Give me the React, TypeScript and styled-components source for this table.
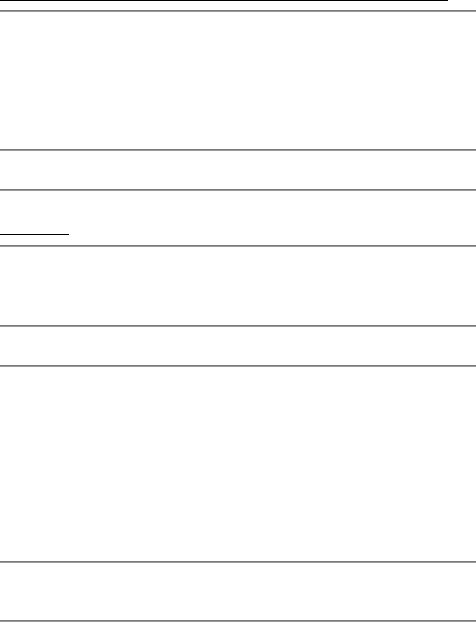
import * as React from 'react'
import styled, { createGlobalStyle } from 'styled-components'

const GlobalStyle = createGlobalStyle`
  html, body {
    margin: 0;
    padding: 0;
    background: #ffffff;
    font-family: 'Liberation Sans', Arial, sans-serif;
  }
`

const Page = styled.div`
  display: flex;
  flex-flow: column;
  width: 476px;
  height: 622px;
  overflow: hidden;
`

const TopRule = styled.div`
  width: 448px;
  height: 1px;
  background: #000000;
  margin-bottom: 9px;
`

const Divider = styled.hr`
  margin: 0;
  height: 0;
  border: none;
  border-top: 1px solid #7a7a7a;
  border-bottom: 1px solid #9a9a9a;
`

const Section = styled.section<{ $height: number }>`
  display: flex;
  flex-flow: column;
  justify-content: flex-end;
  height: ${({ $height }) => $height}px;
`

const Underline = styled.div`
  width: 69px;
  height: 1px;
  background: #000000;
  margin-bottom: 10px;
`

const sections = [137, 38, 54, 78, 38, 194, 57]

const App = () => (
  <Page>
    <GlobalStyle />
    <TopRule />
    {sections.map((height, key) => (
      <React.Fragment key={key}>
        <Divider />
        <Section $height={height}>{key === 2 && <Underline />}</Section>
      </React.Fragment>
    ))}
    <Divider />
  </Page>
)

export default App
